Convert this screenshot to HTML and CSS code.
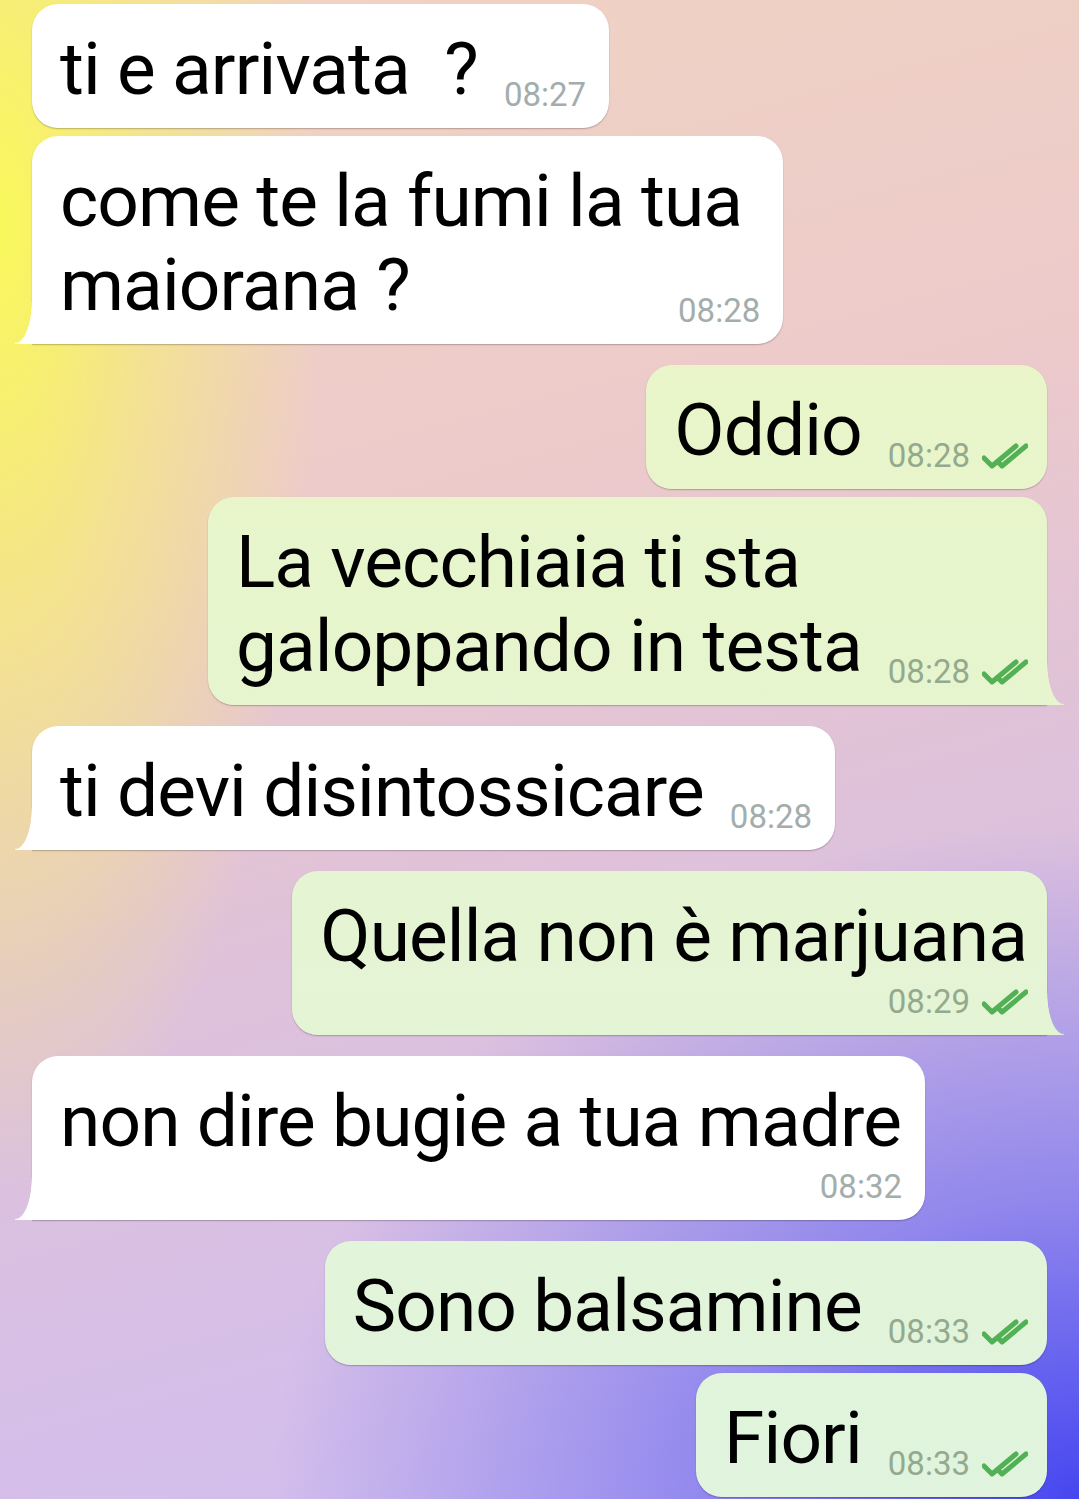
FILE: index.html
```html
<!DOCTYPE html>
<html lang="it">
<head>
  <meta charset="UTF-8">
  <title>Chat</title>
  <link rel="stylesheet" href="styles.css">
</head>
<body>

  <div class="chat">
    <div class="bubble in">ti e arrivata&nbsp; ?<span class="meta">08:27</span></div>
    <div class="bubble in tail">come te la fumi la tua&nbsp;<br>maiorana ?<span class="meta">08:28</span></div>

    <div class="bubble out first">Oddio<span class="meta">08:28
      <svg class="ticks" width="46" height="26" viewBox="0 0 46 26"><path d="M2 15 L10 23 L34 3 M16.5 19.5 L20 23 L44 3"/></svg></span></div>
    <div class="bubble out tail">La vecchiaia ti sta<br>galoppando in testa<span class="meta">08:28
      <svg class="ticks" width="46" height="26" viewBox="0 0 46 26"><path d="M2 15 L10 23 L34 3 M16.5 19.5 L20 23 L44 3"/></svg></span></div>

    <div class="bubble in tail first">ti devi disintossicare<span class="meta">08:28</span></div>

    <div class="bubble out tail first">Quella non è marjuana<span class="meta below">08:29
      <svg class="ticks" width="46" height="26" viewBox="0 0 46 26"><path d="M2 15 L10 23 L34 3 M16.5 19.5 L20 23 L44 3"/></svg></span></div>

    <div class="bubble in tail first">non dire bugie a tua madre<span class="meta below">08:32</span></div>

    <div class="bubble out first">Sono balsamine<span class="meta">08:33
      <svg class="ticks" width="46" height="26" viewBox="0 0 46 26"><path d="M2 15 L10 23 L34 3 M16.5 19.5 L20 23 L44 3"/></svg></span></div>
    <div class="bubble out">Fiori<span class="meta">08:33
      <svg class="ticks" width="46" height="26" viewBox="0 0 46 26"><path d="M2 15 L10 23 L34 3 M16.5 19.5 L20 23 L44 3"/></svg></span></div>
  </div>

</body>
</html>
```

FILE: styles.css
```css
html, body {
  height: 100%;
}

body {
  margin: 0;
  font-family: Roboto, "Noto Sans", sans-serif;
  color: #000;
  overflow: hidden;
  background:
    radial-gradient(ellipse 75% 45% at 100% 100%, #4646f0 0%, rgba(90, 90, 238, 0.55) 45%, rgba(150, 140, 236, 0) 100%),
    radial-gradient(ellipse 30% 65% at 0 15%, #f9f85a 0%, rgba(248, 240, 110, 0.6) 45%, rgba(240, 220, 160, 0) 100%),
    linear-gradient(165deg, #f0d4c2 0%, #eccacb 35%, #e0c2d8 55%, #d6bfe8 80%, #d0bdf2 100%);
}

.chat {
  display: flex;
  flex-direction: column;
  gap: 8px;
  padding: 4px 32px 0;
}

.bubble {
  position: relative;
  padding: 23px 24px 17px 28px;
  font-size: 73px;
  letter-spacing: -0.9px;
  line-height: 84px;
  white-space: nowrap;
  border-radius: 26px;
  box-shadow: 0 1px 1.5px rgba(0, 0, 0, 0.25);
}

.first {
  margin-top: 13px;
}

.in {
  align-self: flex-start;
  background: #fff;
}

.out {
  align-self: flex-end;
  padding-right: 20px;
  background: linear-gradient(#ecf6c2, #e0f4de) fixed;
}

/* little corner tail */
.tail::after {
  content: "";
  position: absolute;
  bottom: 0;
  width: 17px;
  height: 42px;
  background: inherit;
}

.in.tail {
  border-bottom-left-radius: 0;
}

.in.tail::after {
  left: -17px;
  -webkit-mask: radial-gradient(17px 42px at 0 0, transparent 96%, #000 100%);
  mask: radial-gradient(17px 42px at 0 0, transparent 96%, #000 100%);
}

.out.tail {
  border-bottom-right-radius: 0;
}

.out.tail::after {
  right: -17px;
  -webkit-mask: radial-gradient(17px 42px at 100% 0, transparent 96%, #000 100%);
  mask: radial-gradient(17px 42px at 100% 0, transparent 96%, #000 100%);
}

.meta {
  float: right;
  display: flex;
  align-items: center;
  gap: 12px;
  margin: 51px -1px 0 26px;
  font-size: 33px;
  letter-spacing: 0;
  line-height: 33px;
  color: #a3adac;
}

.out .meta {
  color: #93aa8e;
}

.meta.below {
  float: none;
  justify-content: flex-end;
  margin: 7px -1px 0 0;
}

.ticks path {
  fill: none;
  stroke: #52b055;
  stroke-width: 5;
  stroke-linecap: round;
  stroke-linejoin: round;
}
```
